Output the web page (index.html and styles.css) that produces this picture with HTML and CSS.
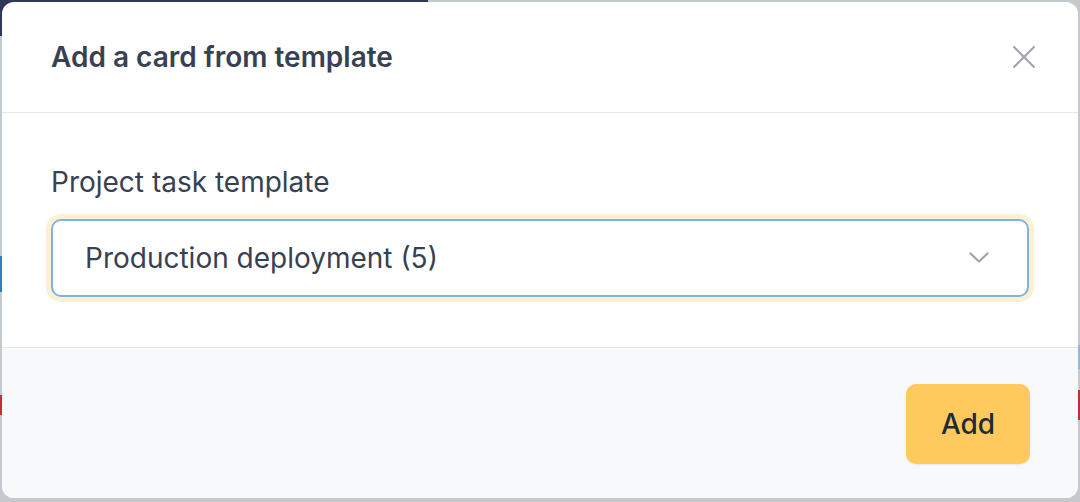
FILE: index.html
```html
<!DOCTYPE html>
<html lang="en">
<head>
<meta charset="utf-8">
<title>Add a card from template</title>
<link rel="stylesheet" href="styles.css">
</head>
<body>
<div class="backdrop" aria-hidden="true">
  <div class="bg-topbar"></div>
  <div class="bg-left-blue"></div>
  <div class="bg-left-red"></div>
  <div class="bg-right-blue"></div>
  <div class="bg-right-red"></div>
</div>
<div class="modal" role="dialog" aria-labelledby="modal-title">
  <header class="modal-header">
    <h2 id="modal-title" class="modal-title">Add a card from template</h2>
    <button class="close-btn" aria-label="Close">
      <svg width="24" height="24" viewBox="0 0 24 24" fill="none" stroke="currentColor" stroke-width="2" stroke-linecap="round"><path d="M2 2L22 22M22 2L2 22"/></svg>
    </button>
  </header>
  <section class="modal-body">
    <label class="field-label" for="tpl">Project task template</label>
    <div class="select-ring">
      <div class="select" id="tpl">
        <span class="select-value">Production deployment (5)</span>
        <svg class="chevron" width="20" height="12" viewBox="0 0 20 12" fill="none" stroke="currentColor" stroke-width="2.2" stroke-linecap="round" stroke-linejoin="round"><path d="M1.5 1.5L10 9.5L18.5 1.5"/></svg>
      </div>
    </div>
  </section>
  <footer class="modal-footer">
    <button class="btn-add">Add</button>
  </footer>
</div>
</body>
</html>
```

FILE: styles.css
```css
* { box-sizing: border-box; }
html, body { margin: 0; padding: 0; }
body {
  width: 1080px;
  height: 502px;
  background: #c5c8cc;
  font-family: Inter, "Noto Sans", sans-serif;
  position: relative;
  overflow: hidden;
  padding: 2px;
}
.backdrop { position: absolute; inset: 0; }
.bg-topbar { position: absolute; left: 0; top: 0; width: 428px; height: 36px; background: #2c3a57; }
.bg-left-blue { position: absolute; left: 0; top: 256px; width: 6px; height: 36px; background: #2f7fbf; }
.bg-left-red { position: absolute; left: 0; top: 395px; width: 6px; height: 20px; background: #c0303a; }
.bg-right-blue { position: absolute; right: 0; top: 345px; width: 6px; height: 24px; background: #9db4cf; }
.bg-right-red { position: absolute; right: 0; top: 390px; width: 6px; height: 30px; background: #c0303a; }

.modal {
  position: relative;
  width: 1076px;
  height: 496px;
  background: #fff;
  border-radius: 12px;
  overflow: hidden;
  display: flex;
  flex-direction: column;
}
.modal-header {
  height: 111px;
  border-bottom: 1px solid #e5e7eb;
  display: flex;
  align-items: center;
  justify-content: space-between;
  padding: 0 42px 0 49px;
}
.modal-title {
  margin: 0;
  font-size: 28px;
  font-weight: 600;
  color: #374151;
  line-height: 34px;
}
.close-btn {
  border: 0;
  background: none;
  padding: 0;
  width: 24px;
  height: 24px;
  color: #9ca3af;
  display: flex;
}
.modal-body {
  height: 235px;
  border-bottom: 1px solid #e5e7eb;
  padding: 54px 44px 0 44px;
  display: flex;
  flex-direction: column;
}
.field-label {
  font-size: 28px;
  color: #374151;
  line-height: 30px;
  margin: 0 0 0 5px;
}
.select-ring {
  margin-top: 17px;
  padding: 5px;
  border-radius: 15px;
  background: #fef0d3;
}
.select {
  height: 78px;
  border: 2px solid #7fb3e6;
  border-radius: 10px;
  background: #fff;
  display: flex;
  align-items: center;
  justify-content: space-between;
  padding: 0 38px 0 32px;
}
.select-value {
  font-size: 28px;
  color: #374151;
}
.chevron { color: #9ca3af; }
.modal-footer {
  flex: 1;
  background: #f8f9fb;
  display: flex;
  justify-content: flex-end;
  align-items: flex-start;
  padding: 36px 48px 0 0;
}
.btn-add {
  width: 124px;
  height: 80px;
  border: 0;
  border-radius: 10px;
  background: #fec95d;
  color: #1f2937;
  font-family: Inter, "Noto Sans", sans-serif;
  font-size: 28px;
  font-weight: 500;
  box-shadow: 0 1px 2px rgba(0,0,0,0.08);
}
```
